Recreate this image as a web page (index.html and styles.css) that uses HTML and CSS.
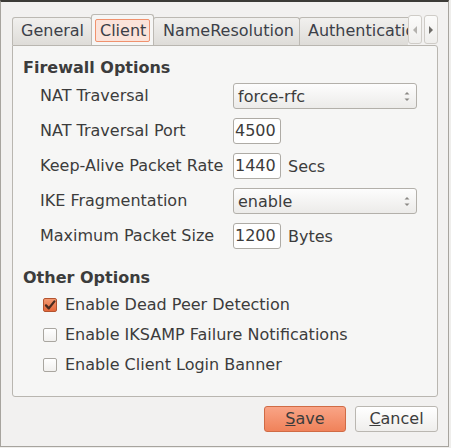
FILE: index.html
```html
<!DOCTYPE html>
<html>
<head>
<meta charset="utf-8">
<title>Client</title>
<link rel="stylesheet" href="styles.css">
</head>
<body>
<div class="window">
  <div class="notebook">
    <div class="tabbar">
      <div class="tabs">
        <div class="tab t-general">General</div>
        <div class="tab active"><span class="focus">Client</span></div>
        <div class="tab t-name">NameResolution</div>
        <div class="tab t-auth">Authentication</div>
      </div>
      <div class="scroll">
        <div class="sbtn"><svg width="6" height="8" viewBox="0 0 6 8"><polygon points="5,0 1,4 5,8" fill="#b4b2ae"/></svg></div>
        <div class="sbtn"><svg width="6" height="8" viewBox="0 0 6 8"><polygon points="1,0 5,4 1,8" fill="#6e6c68"/></svg></div>
      </div>
    </div>
    <div class="panel">
      <div class="heading">Firewall Options</div>
      <div class="grid">
        <div class="label">NAT Traversal</div>
        <div class="combo"><span>force-rfc</span><svg class="updown" width="6" height="11" viewBox="0 0 6 11"><polygon points="0.5,3.5 3,1 5.5,3.5" fill="#8a8884"/><polygon points="0.5,7.5 3,10 5.5,7.5" fill="#8a8884"/></svg></div>
        <div class="label">NAT Traversal Port</div>
        <div class="ctl"><div class="entry">4500</div></div>
        <div class="label">Keep-Alive Packet Rate</div>
        <div class="ctl"><div class="entry">1440</div><span class="unit">Secs</span></div>
        <div class="label">IKE Fragmentation</div>
        <div class="combo"><span>enable</span><svg class="updown" width="6" height="11" viewBox="0 0 6 11"><polygon points="0.5,3.5 3,1 5.5,3.5" fill="#8a8884"/><polygon points="0.5,7.5 3,10 5.5,7.5" fill="#8a8884"/></svg></div>
        <div class="label">Maximum Packet Size</div>
        <div class="ctl"><div class="entry">1200</div><span class="unit">Bytes</span></div>
      </div>
      <div class="heading h2">Other Options</div>
      <div class="checks">
        <div class="check"><span class="box on"><svg width="14" height="14" viewBox="0 0 14 14"><path d="M3 7.4 L5.8 10.4 L11.4 3.4" fill="none" stroke="#4a2c20" stroke-width="2.3" stroke-linecap="round" stroke-linejoin="round"/></svg></span>Enable Dead Peer Detection</div>
        <div class="check"><span class="box"></span>Enable IKSAMP Failure Notifications</div>
        <div class="check"><span class="box"></span>Enable Client Login Banner</div>
      </div>
    </div>
  </div>
  <div class="buttons">
    <div class="btn save"><span class="u">S</span>ave</div>
    <div class="btn cancel"><span class="u">C</span>ancel</div>
  </div>
</div>
</body>
</html>
```
FILE: styles.css
```css
html, body {
  margin: 0;
  padding: 0;
}
body {
  width: 451px;
  height: 448px;
  overflow: hidden;
  background: #efeeec;
  font-family: "DejaVu Sans", "Liberation Sans", sans-serif;
  font-size: 16px;
  color: #3c3c3c;
}
.window {
  box-sizing: border-box;
  width: 449px;
  height: 447px;
  background: #f2f1f0;
  border-top: 2px solid #3c3b37;
  border-left: 1px solid #a7a49e;
  border-right: 1px solid #a7a49e;
  border-bottom: 1px solid #a7a49e;
  padding: 12px 0 0 11px;
}
.notebook {
  width: 426px;
}
.tabbar {
  display: flex;
  align-items: flex-end;
  height: 31px;
  position: relative;
}
.tabs {
  display: flex;
  align-items: flex-end;
  width: 396px;
  height: 31px;
  overflow: hidden;
  flex: none;
}
.tab {
  box-sizing: border-box;
  flex: none;
  height: 28px;
  line-height: 26px;
  border: 1px solid #bcb9b3;
  border-bottom: none;
  border-radius: 3px 3px 0 0;
  background: linear-gradient(#f1f0ee, #dedcd8);
  padding-left: 8px;
  white-space: nowrap;
  color: #3c3f48;
}
.t-general { width: 80px; }
.t-name { width: 147px; padding-left: 9px; margin-left: -1px; }
.t-auth { width: 120px; margin-left: -1px; }
.tab.active {
  height: 32px;
  margin-bottom: -1px;
  width: 63px;
  margin-left: -1px;
  background: #f6f6f5;
  padding: 4px 0 0 3px;
  line-height: 20px;
  position: relative;
  z-index: 2;
}
.focus {
  display: inline-block;
  box-sizing: border-box;
  width: 55px;
  height: 23px;
  line-height: 21px;
  padding-left: 4px;
  border: 1px solid #f0926e;
  border-radius: 2px;
  background: #fbe3da;
}
.scroll {
  display: flex;
  gap: 2px;
  align-self: flex-start;
  margin-top: 1px;
}
.sbtn {
  box-sizing: border-box;
  width: 14px;
  height: 29px;
  border: 1px solid #cfccc7;
  border-radius: 3px;
  background: linear-gradient(#fbfbfa, #efeeec);
  display: flex;
  align-items: center;
  justify-content: center;
}
.panel {
  box-sizing: border-box;
  width: 426px;
  height: 352px;
  border: 1px solid #b9b6b0;
  border-radius: 0 3px 3px 3px;
  background: #f6f6f5;
  padding: 14px 0 0 10px;
  position: relative;
  z-index: 1;
}
.heading {
  font-weight: bold;
  line-height: 16px;
  height: 16px;
}
.grid {
  display: grid;
  grid-template-columns: 193px 184px;
  grid-auto-rows: 26px;
  row-gap: 9px;
  margin: 7px 0 0 17px;
}
.label {
  line-height: 26px;
  white-space: nowrap;
}
.combo {
  box-sizing: border-box;
  height: 26px;
  border: 1px solid #b3b0aa;
  border-radius: 3px;
  background: linear-gradient(#fdfdfd, #ecebe9);
  display: flex;
  align-items: center;
  justify-content: space-between;
  padding: 0 6px 0 4px;
}
.ctl {
  display: flex;
  align-items: center;
  gap: 7px;
}
.entry {
  box-sizing: border-box;
  width: 48px;
  height: 26px;
  line-height: 24px;
  border: 1px solid #aeaba5;
  border-radius: 3px;
  background: #ffffff;
  padding-left: 1px;
  overflow: hidden;
}
.h2 {
  margin-top: 21px;
}
.checks {
  margin: 3px 0 0 20px;
}
.check {
  display: flex;
  align-items: center;
  height: 30px;
  gap: 8px;
  white-space: nowrap;
}
.box {
  box-sizing: border-box;
  width: 14px;
  height: 14px;
  border: 1px solid #a9a6a0;
  border-radius: 2px;
  background: linear-gradient(#ffffff, #f1f0ee);
  flex: none;
  position: relative;
  top: 1px;
}
.box.on {
  border-color: #b3532e;
  background: linear-gradient(#f39a72, #e4673a);
}
.box svg {
  display: block;
  margin: -1px;
}
.buttons {
  display: flex;
  justify-content: flex-end;
  gap: 9px;
  margin-top: 9px;
  padding-right: 10px;
}
.btn {
  box-sizing: border-box;
  height: 26px;
  line-height: 24px;
  text-align: center;
  border-radius: 3px;
}
.save {
  width: 82px;
  border: 1px solid #d06b45;
  background: linear-gradient(#f9a486, #f0825a);
}
.cancel {
  width: 83px;
  border: 1px solid #bab7b1;
  background: linear-gradient(#ffffff, #efeeec);
}
.u {
  text-decoration: underline;
}
```
